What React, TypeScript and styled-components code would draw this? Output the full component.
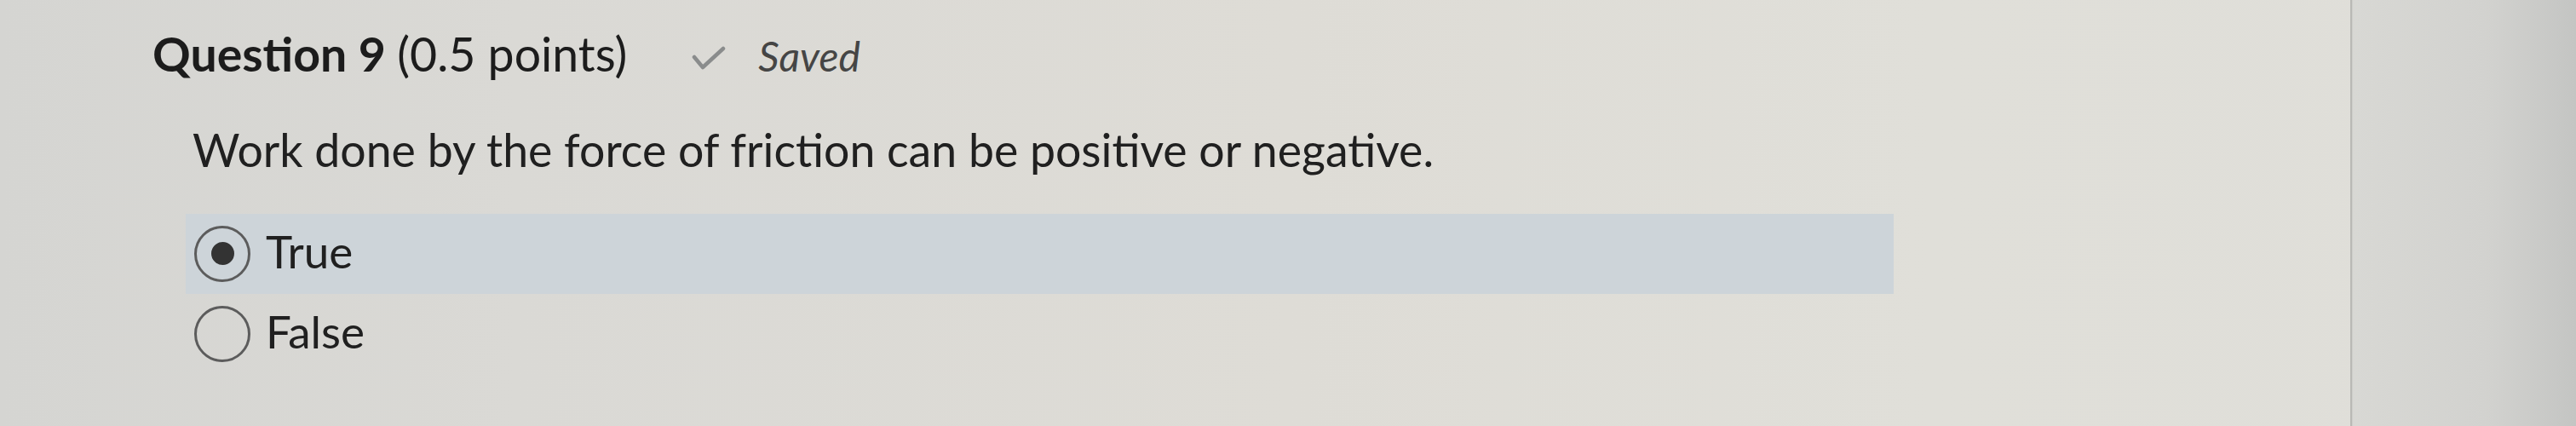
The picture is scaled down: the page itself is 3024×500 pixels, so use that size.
import React from "react";
import styled, { createGlobalStyle } from "styled-components";

const GlobalStyle = createGlobalStyle`
  html, body {
    margin: 0;
    padding: 0;
  }
  body {
    background: #dcdbd6;
    font-family: Lato, "Open Sans", "Liberation Sans", sans-serif;
    color: #222;
  }
`;

type Choice = { label: string; checked: boolean };

const choices: Choice[] = [
  { label: "True", checked: true },
  { label: "False", checked: false },
];

const Quiz = () => {
  return (
    <Page>
      <GlobalStyle />
      <Main>
        <Header>
          <Title>
            Question 9 <Points>(0.5 points)</Points>
          </Title>
          <SavedTag>
            <svg width="40" height="30" viewBox="0 0 40 30">
              <polyline
                points="3,14 13,26 37,4"
                fill="none"
                stroke="#8a8c8c"
                strokeWidth="4.5"
                strokeLinecap="round"
                strokeLinejoin="round"
              />
            </svg>
            <SavedText>Saved</SavedText>
          </SavedTag>
        </Header>
        <Prompt>Work done by the force of friction can be positive or negative.</Prompt>
        <Options>
          {choices.map((c) => (
            <Option key={c.label} $selected={c.checked}>
              <Radio $checked={c.checked} />
              <OptionLabel>{c.label}</OptionLabel>
            </Option>
          ))}
        </Options>
      </Main>
      <Side />
    </Page>
  );
};

export default Quiz;

export const Page = styled.div`
  display: flex;
  width: 3024px;
  height: 500px;
  overflow: hidden;
  background: linear-gradient(
    90deg,
    #d5d5d2 0%,
    #dad9d5 20%,
    #dedcd6 50%,
    #e0dfd9 75%,
    #dfded9 100%
  );
`;

export const Main = styled.div`
  flex: 1;
  padding: 30px 0 0 179px;
  border-right: 2px solid #b9b9b5;
  box-sizing: border-box;
`;

export const Side = styled.div`
  width: 262px;
  border-left: 1px solid #cfcfcb;
  background: linear-gradient(90deg, #d8d8d4 0%, #d2d2cf 60%, #c4c5c3 100%);
`;

export const Header = styled.div`
  display: flex;
  align-items: baseline;
  line-height: 1.2;
`;

export const Title = styled.h2`
  margin: 0;
  font-size: 55.4px;
  font-weight: 700;
  color: #1c1c1c;
`;

export const Points = styled.span`
  font-weight: 400;
`;

export const SavedTag = styled.span`
  display: inline-flex;
  align-items: baseline;
  gap: 38px;
  margin-left: 76px;
  svg {
    align-self: center;
    transform: translateY(2px);
  }
`;

export const SavedText = styled.span`
  font-size: 48px;
  font-style: italic;
  color: #454545;
`;

export const Prompt = styled.p`
  margin: 47px 0 0 47px;
  font-size: 53.6px;
  line-height: 1.2;
  color: #202020;
`;

export const Options = styled.div`
  display: flex;
  flex-direction: column;
  width: 2005px;
  margin: 43px 0 0 39px;
`;

export const Option = styled.label<{ $selected: boolean }>`
  display: flex;
  align-items: center;
  gap: 18px;
  height: 94px;
  padding-left: 10px;
  background: ${(p) => (p.$selected ? "#cdd4d9" : "transparent")};
  font-size: 53px;
  line-height: 1.2;
  color: #202020;
`;

export const Radio = styled.span<{ $checked: boolean }>`
  position: relative;
  width: 66px;
  height: 66px;
  box-sizing: border-box;
  border: 3px solid #5c5c5c;
  border-radius: 50%;
  flex-shrink: 0;
  &::after {
    content: "";
    display: ${(p) => (p.$checked ? "block" : "none")};
    position: absolute;
    left: 50%;
    top: 50%;
    width: 27px;
    height: 27px;
    margin: -13.5px 0 0 -13.5px;
    border-radius: 50%;
    background: #333;
  }
`;

export const OptionLabel = styled.span`
  transform: translateY(-3px);
`;
